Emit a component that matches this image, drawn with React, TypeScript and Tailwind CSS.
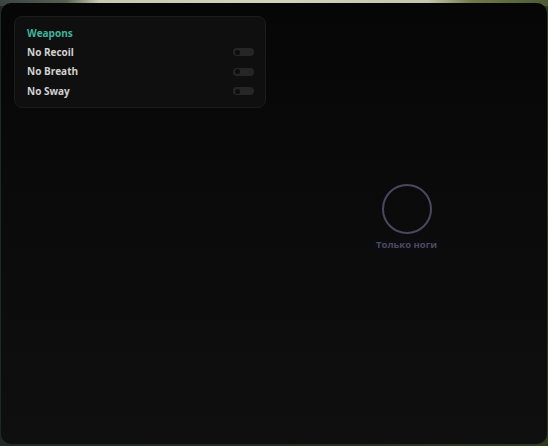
import React from "react";

function Toggle() {
  return (
    <div className="w-[21px] h-[8px] rounded-full bg-[#262626] flex items-center pl-[2px]">
      <div className="w-[5px] h-[5px] rounded-full bg-[#0e0e0e]" />
    </div>
  );
}

function Row({ label }: { label: string }) {
  return (
    <div className="h-[19.5px] flex items-center justify-between">
      <span className="text-[10px] font-bold text-[#d2d2d2]">{label}</span>
      <Toggle />
    </div>
  );
}

export default function App() {
  return (
    <div
      className="relative w-[548px] h-[446px] overflow-hidden bg-[linear-gradient(90deg,#3b4443_0%,#56604f_12%,#c9c9b2_18%,#d4d3bb_50%,#c6c6ae_78%,#6f7a4a_86%,#4d5a34_100%)]"
      style={{ fontFamily: "'Open Sans', 'Noto Sans', sans-serif" }}
    >
      <div className="absolute left-0 bottom-0 w-full h-[440px] bg-[linear-gradient(90deg,#1f2a26_0%,#222b22_50%,#2c3a1e_100%)]" />
      <div className="relative mx-[1px] mt-[3px] h-[441px] rounded-[10px] bg-[linear-gradient(180deg,#060606_0%,#0b0b0b_50%,#0f0f0f_100%)] pt-[13px] pl-[13px]">
        <div className="w-[252px] h-[92px] rounded-[8px] bg-[#0f0f0f] border border-[#1c1c1c] pt-[9px] pb-[8px] pl-[12px] pr-[11px]">
          <div className="h-[14px] flex items-center text-[10px] font-bold text-[#3fb59c]">
            Weapons
          </div>
          <div className="mt-[2.5px]">
            <Row label="No Recoil" />
            <Row label="No Breath" />
            <Row label="No Sway" />
          </div>
        </div>
        <div className="absolute left-[381px] top-[181px] w-[50px] h-[50px] rounded-full border-2 border-[#4a4760]" />
        <div className="absolute left-[372px] top-[236px] h-[13px] px-[3px] bg-[#0c0c10] flex items-center text-[9.5px] font-bold text-[#4d4a5e]">
          Только ноги
        </div>
      </div>
    </div>
  );
}
